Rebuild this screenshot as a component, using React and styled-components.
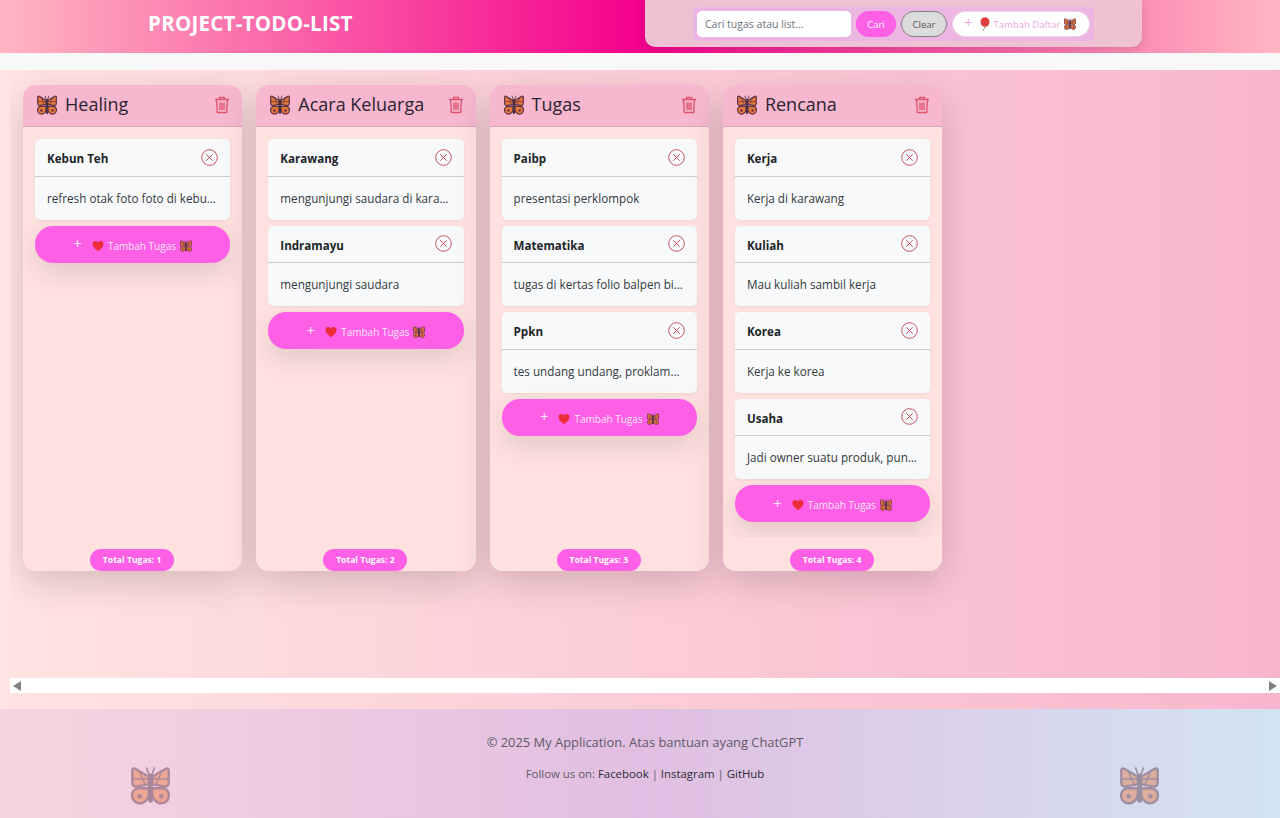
//IMPORTS
import React from 'react'
import styled, { createGlobalStyle } from 'styled-components'

//DATA
const lists = [
  { name: 'Healing', tasks: [['Kebun Teh', 'refresh otak foto foto di kebun teh yang sejuk sekali']] },
  { name: 'Acara Keluarga', tasks: [['Karawang', 'mengunjungi saudara di karawang bersama keluarga'], ['Indramayu', 'mengunjungi saudara']] },
  { name: 'Tugas', tasks: [['Paibp', 'presentasi perklompok'], ['Matematika', 'tugas di kertas folio balpen biru dan hitam'], ['Ppkn', 'tes undang undang, proklamasi dan pancasila']] },
  { name: 'Rencana', tasks: [['Kerja', 'Kerja di karawang'], ['Kuliah', 'Mau kuliah sambil kerja'], ['Korea', 'Kerja ke korea'], ['Usaha', 'Jadi owner suatu produk, punya usaha sendiri']] },
]

//STYLE
const font = `"Open Sans", "Noto Sans", "Liberation Sans", sans-serif`
const Global = createGlobalStyle`
  html, body { margin: 0; padding: 0; height: 100%; background: #f8f8f8; overflow: hidden; }
  body { font-family: ${font}; }
  * { box-sizing: border-box; }
`
const Page = styled.div`
  width: 1280px;
  height: 818px;
  display: flex;
  flex-direction: column;
`
const Header = styled.header`
  height: 53px;
  flex: none;
  display: flex;
  justify-content: space-between;
  padding: 0 138px 0 148px;
  background: linear-gradient(90deg, #ffb6c1 0%, #f5008c 50%, #ffb6c1 100%);
`
const Title = styled.h1`
  margin: 0;
  font-size: 20.6px;
  line-height: 47px;
  font-weight: 700;
  color: #fff;
  letter-spacing: 0.2px;
`
const SearchPanel = styled.div`
  width: 497px;
  height: 47px;
  display: flex;
  justify-content: center;
  padding-top: 7px;
  background: #eec2d3;
  border-radius: 0 0 10px 10px;
  box-shadow: 0 4px 12px rgba(0, 0, 0, 0.12);
`
const SearchGroup = styled.div`
  height: 34px;
  display: flex;
  align-items: center;
  gap: 5px;
  padding: 0 4px;
  border-radius: 6px;
  background: #ecb6e2;
`
const SearchInput = styled.input`
  width: 154px;
  height: 26px;
  border: 0;
  border-radius: 5px;
  padding: 0 8px;
  background: #fff;
  font-family: ${font};
  font-size: 10.5px;
  outline: none;
  &::placeholder { color: #6c757d; opacity: 1; }
`
const SearchButton = styled.button`
  height: 26px;
  width: 40px;
  padding: 0;
  border: 0;
  border-radius: 13px;
  background: #ff5ee6;
  color: #fff;
  font-family: ${font};
  font-size: 9.5px;
`
const ClearButton = styled(SearchButton)`
  width: 46px;
  border: 1px solid #808080;
  background: #dcdcdc;
  color: #555;
`
const AddListButton = styled.button`
  width: 138px;
  height: 26px;
  padding: 0 0 0 11px;
  border: 1px solid #f3d3ee;
  border-radius: 13px;
  background: #fff;
  color: #eaa6dc;
  font-family: ${font};
  font-size: 9.5px;
  display: flex;
  align-items: center;
  gap: 4px;
`
const Strip = styled.div`
  height: 17px;
  flex: none;
  background: #f8f8f8;
`
const Main = styled.main`
  flex: 1;
  min-height: 0;
  display: flex;
  flex-direction: column;
  padding: 0 0 16px 10px;
  background: linear-gradient(90deg, #ffe4e1 0%, #f8b6ce 100%);
`
const Board = styled.div`
  flex: 1;
  min-height: 0;
  overflow: hidden;
  display: flex;
  align-items: flex-start;
  gap: 14px;
  padding: 15px 13px;
`
const Column = styled.section`
  width: 219.3px;
  height: 486px;
  flex: none;
  display: flex;
  flex-direction: column;
  overflow: hidden;
  border-radius: 13px;
  background: #ffe2e0;
  box-shadow: 0 12px 36px rgba(0, 0, 0, 0.16);
`
const ColumnHead = styled.div`
  height: 42px;
  flex: none;
  display: flex;
  align-items: center;
  gap: 8px;
  padding: 0 12px 2px 14px;
  background: #f6b7cf;
  border-bottom: 1px solid #d9a6b6;
`
const ColumnName = styled.h2`
  flex: 1;
  margin: -2px 0 0;
  font-size: 18px;
  font-weight: 500;
  color: #2b2430;
`
const TaskList = styled.div`
  flex: 1;
  min-height: 0;
  display: flex;
  flex-direction: column;
  gap: 6px;
  padding: 12px 12px 0;
`
const Task = styled.article`
  flex: none;
  background: #f8f9fa;
  border-radius: 5px;
  box-shadow: 0 1px 3px rgba(0, 0, 0, 0.06);
`
const TaskHead = styled.div`
  height: 37.5px;
  display: flex;
  align-items: center;
  justify-content: space-between;
  padding: 0 12px;
  border-bottom: 1px solid #ccc;
`
const TaskTitle = styled.h3`
  margin: 3px 0 0;
  font-size: 11.6px;
  font-weight: 700;
  color: #212529;
`
const TaskText = styled.p`
  margin: 0;
  height: 43px;
  padding: 0 12px;
  line-height: 43px;
  font-size: 11.7px;
  color: #343a40;
  white-space: nowrap;
  overflow: hidden;
  text-overflow: ellipsis;
`
const AddTask = styled.button`
  flex: none;
  height: 37px;
  padding: 3px 0 0;
  border: 0;
  border-radius: 18px;
  background: #ff5ee6;
  color: #ffe6f8;
  font-family: ${font};
  font-size: 10px;
  display: flex;
  align-items: center;
  justify-content: center;
  gap: 4px;
  box-shadow: 0 10px 28px rgba(0, 0, 0, 0.12);
`
const Plus = styled.span`
  font-size: 15px;
  line-height: 1;
  margin: -4px ${(p) => p.$gap}px 0 0;
`
const ColumnFoot = styled.div`
  height: 34px;
  flex: none;
  display: flex;
  justify-content: center;
  align-items: flex-end;
  background: #ffe2e0;
`
const Total = styled.span`
  height: 22px;
  width: 84px;
  margin-right: 1px;
  border-radius: 11px;
  background: #ff5ee6;
  color: #fff;
  font-size: 8.6px;
  font-weight: 700;
  line-height: 22px;
  text-align: center;
`
const Scrollbar = styled.div`
  height: 15px;
  flex: none;
  display: flex;
  justify-content: space-between;
  align-items: center;
  padding: 0 3px;
  background: #fff;
`
const Arrow = styled.span`
  width: 0;
  height: 0;
  border-top: 5px solid transparent;
  border-bottom: 5px solid transparent;
  ${(p) => p.$right ? 'border-left: 8px solid #808080;' : 'border-right: 8px solid #808080;'}
`
const Footer = styled.footer`
  position: relative;
  height: 109px;
  flex: none;
  padding: 24px 0 0 10px;
  text-align: center;
  background: linear-gradient(90deg, #f8d4e0 0%, #e1bfe2 50%, #d2e4f2 100%);
  color: #5f5a66;
`
const Copy = styled.p`
  margin: 0 0 14px;
  font-size: 12.9px;
  line-height: 18px;
`
const Follow = styled.p`
  margin: 0;
  font-size: 11.4px;
  line-height: 18px;
`
const FooterLink = styled.a`
  color: #2b2b33;
  text-decoration: none;
`
const FooterFly = styled.span`
  position: absolute;
  top: 57px;
  ${(p) => p.$right ? 'right: 121px;' : 'left: 131px;'}
  opacity: 0.45;
  display: flex;
`

//ICONS
const Butterfly = ({ size = 20 }) => (
  <svg width={size} height={size} viewBox="0 0 36 36">
    <path d="M17 9 14.500 2M19 9l2.500-7" stroke="#5c3b4a" strokeWidth="1.600" fill="none" strokeLinecap="round" />
    <path d="M16.500 17V10L4 2.500C2.500 1.700 1.200 2.500 1.200 4v11.500c0 2 1 3.200 3 3.500z" fill="#e9773a" stroke="#5c3347" strokeWidth="2.200" strokeLinejoin="round" />
    <path d="M19.500 17V10L32 2.500c1.500-.8 2.800 0 2.800 1.500v11.500c0 2-1 3.200-3 3.500z" fill="#e9773a" stroke="#5c3347" strokeWidth="2.200" strokeLinejoin="round" />
    <path d="M16.500 20.500H8c-4.500 0-7 3-7 6.700C1 31 4 34.500 8 34.500c4.500 0 8.500-4.500 8.500-9z" fill="#e9773a" stroke="#5c3347" strokeWidth="2.200" strokeLinejoin="round" />
    <path d="M19.500 20.500H28c4.500 0 7 3 7 6.700 0 3.800-3 7.300-7 7.300-4.500 0-8.500-4.500-8.500-9z" fill="#e9773a" stroke="#5c3347" strokeWidth="2.200" strokeLinejoin="round" />
    <path d="M2 12h14M34 12H20M8 5.500 13 17M28 5.500 23 17" stroke="#5c3347" strokeWidth="1.200" />
    <circle cx="8" cy="28" r="2.200" fill="#5c3347" />
    <circle cx="28" cy="28" r="2.200" fill="#5c3347" />
    <rect x="15.800" y="7" width="4.400" height="27" rx="2.200" fill="#4d3045" />
  </svg>
)
const Trash = () => (
  <svg width="16" height="18" viewBox="0 0 16 18" fill="none" stroke="#e0566e" strokeWidth="1.400">
    <path d="M1 3.500h14M5.500 3.500V1.500h5v2M2.500 3.500l.8 13h9.400l.8-13M6 6.500v7.500M10 6.500v7.500M8 6.500v7.500" strokeLinejoin="round" />
  </svg>
)
const CloseCircle = () => (
  <svg width="17" height="17" viewBox="0 0 17 17" fill="none" stroke="#c9515f" strokeWidth="1">
    <circle cx="8.500" cy="8.500" r="7.800" />
    <path d="M5.300 5.300l6.400 6.400M11.700 5.300l-6.400 6.400" />
  </svg>
)
const Heart = () => (
  <svg width="12" height="12" viewBox="0 0 12 12">
    <path d="M6 11.200C2.500 8.500.5 6.600.5 4.100.5 2.300 1.900 1 3.400 1 4.500 1 5.500 1.600 6 2.600 6.500 1.600 7.500 1 8.600 1c1.500 0 2.900 1.300 2.900 3.100 0 2.500-2 4.400-5.500 7.100z" fill="#ec2d3a" />
  </svg>
)
const Balloon = () => (
  <svg width="11" height="14" viewBox="0 0 11 14">
    <ellipse cx="6" cy="5" rx="4.500" ry="4.800" fill="#e0403f" />
    <path d="M6 10c0 1.500-2 1.500-2 3.500" stroke="#8a6a5a" fill="none" />
  </svg>
)

//MAIN COMPONENT
const App = () => {
  return (
    <Page>
      <Global />
      <Header>
        <Title>PROJECT-TODO-LIST</Title>
        <SearchPanel>
          <SearchGroup>
            <SearchInput placeholder="Cari tugas atau list..." />
            <SearchButton>Cari</SearchButton>
            <ClearButton>Clear</ClearButton>
            <AddListButton>
              <Plus $gap={2}>+</Plus>
              <Balloon />
              Tambah Daftar
              <Butterfly size={12} />
            </AddListButton>
          </SearchGroup>
        </SearchPanel>
      </Header>
      <Strip />
      <Main>
        <Board>
          {lists.map((list) => (
            <Column key={list.name}>
              <ColumnHead>
                <Butterfly />
                <ColumnName>{list.name}</ColumnName>
                <Trash />
              </ColumnHead>
              <TaskList>
                {list.tasks.map(([title, text]) => (
                  <Task key={title}>
                    <TaskHead>
                      <TaskTitle>{title}</TaskTitle>
                      <CloseCircle />
                    </TaskHead>
                    <TaskText>{text}</TaskText>
                  </Task>
                ))}
                <AddTask>
                  <Plus $gap={6}>+</Plus>
                  <Heart />
                  Tambah Tugas
                  <Butterfly size={12} />
                </AddTask>
              </TaskList>
              <ColumnFoot>
                <Total>Total Tugas: {list.tasks.length}</Total>
              </ColumnFoot>
            </Column>
          ))}
        </Board>
        <Scrollbar>
          <Arrow />
          <Arrow $right />
        </Scrollbar>
      </Main>
      <Footer>
        <Copy>© 2025 My Application. Atas bantuan ayang ChatGPT</Copy>
        <Follow>
          Follow us on: <FooterLink href="#">Facebook</FooterLink> | <FooterLink href="#">Instagram</FooterLink> | <FooterLink href="#">GitHub</FooterLink>
        </Follow>
        <FooterFly><Butterfly size={39} /></FooterFly>
        <FooterFly $right><Butterfly size={39} /></FooterFly>
      </Footer>
    </Page>
  )
}
export default App
